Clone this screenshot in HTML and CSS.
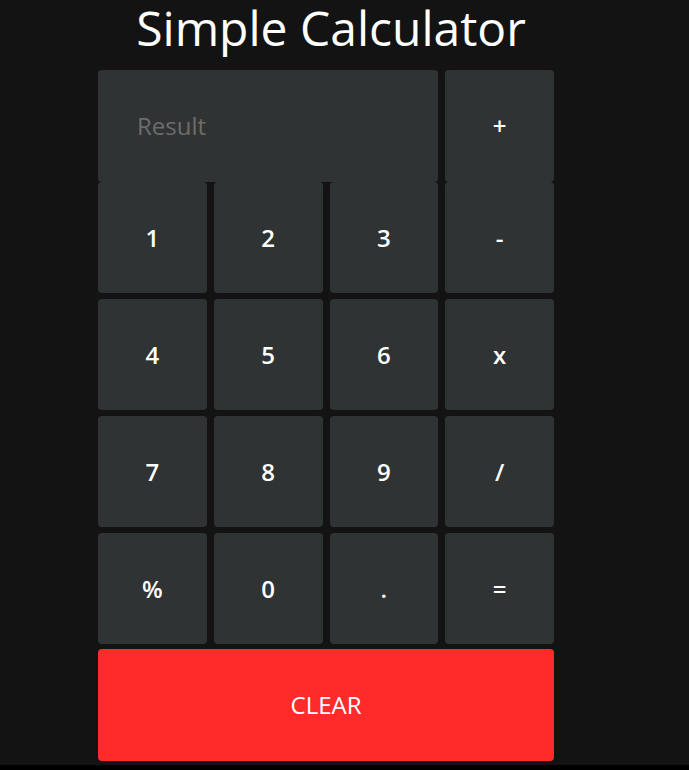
FILE: index.html
```html
<!DOCTYPE html>
<html>
<head>
<meta charset="utf-8">
<link rel="stylesheet" href="styles.css">
</head>
<body>
<div class="page">
  <h1 class="title">Simple Calculator</h1>
  <div class="calc">
    <div class="top-row">
      <div class="result">Result</div>
      <div class="key">+</div>
    </div>
    <div class="keys">
      <div class="key">1</div>
      <div class="key">2</div>
      <div class="key">3</div>
      <div class="key">-</div>
      <div class="key">4</div>
      <div class="key">5</div>
      <div class="key">6</div>
      <div class="key">x</div>
      <div class="key">7</div>
      <div class="key">8</div>
      <div class="key">9</div>
      <div class="key">/</div>
      <div class="key">%</div>
      <div class="key">0</div>
      <div class="key">.</div>
      <div class="key">=</div>
    </div>
    <div class="clear">CLEAR</div>
  </div>
</div>
</body>
</html>
```
FILE: styles.css
```css
html, body {
  margin: 0;
  padding: 0;
  background: #000;
}
.page {
  height: 765px;
  background: #131313;
  font-family: "Open Sans", sans-serif;
  color: #fff;
  overflow: hidden;
}
.title {
  margin: 0 0 0 98px;
  width: 466px;
  white-space: nowrap;
  text-align: center;
  font-size: 48px;
  font-weight: 400;
  line-height: 56px;
  height: 70px;
}
.calc {
  margin-left: 98px;
  width: 456px;
}
.top-row {
  display: grid;
  grid-template-columns: 1fr 108.75px;
  column-gap: 7px;
  height: 111.7px;
  margin-bottom: 0.6px;
}
.result {
  background: #303333;
  border-radius: 4px;
  color: #6b6d6d;
  font-size: 24px;
  display: flex;
  align-items: center;
  padding-left: 39px;
}
.keys {
  display: grid;
  grid-template-columns: repeat(4, 1fr);
  grid-auto-rows: 111.2px;
  column-gap: 7px;
  row-gap: 5.6px;
}
.key {
  background: #303333;
  border-radius: 4px;
  display: flex;
  align-items: center;
  justify-content: center;
  font-size: 24px;
  font-weight: 600;
}
.clear {
  margin-top: 5px;
  height: 112px;
  background: #ff2a2a;
  border-radius: 4px;
  display: flex;
  align-items: center;
  justify-content: center;
  font-size: 24px;
}
```
